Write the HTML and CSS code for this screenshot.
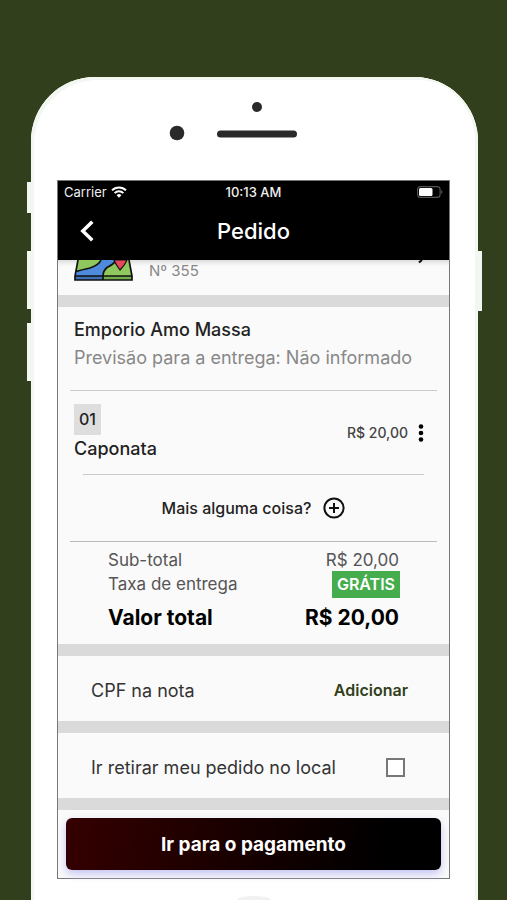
FILE: index.html
```html
<!DOCTYPE html>
<html lang="pt-BR">
<head>
<meta charset="utf-8">
<meta name="viewport" content="width=device-width, initial-scale=1">
<title>Pedido</title>
<link rel="stylesheet" href="styles.css">
</head>
<body>
<div class="phone">
  <span class="key key-mute"></span>
  <span class="key key-up"></span>
  <span class="key key-down"></span>
  <span class="key key-power"></span>
  <div class="bezel">
    <svg width="122" height="38" viewBox="0 0 122 38" aria-hidden="true">
      <circle cx="88" cy="5" r="5" fill="#2a2a2a"/>
      <circle cx="8" cy="31" r="7.3" fill="#2a2a2a"/>
      <rect x="48" y="28.500" width="80" height="7" rx="3.500" fill="#2a2a2a"/>
    </svg>
  </div>
  <main class="screen">
    <div class="status">
      <span class="carrier">Carrier
        <svg width="16" height="12" viewBox="0 0 16 12" aria-hidden="true">
          <g fill="none" stroke="#fff" stroke-width="2"><path d="M1 4.400a10 10 0 0 1 14 0"/><path d="M3.600 7.100a6.300 6.300 0 0 1 8.800 0"/></g>
          <path d="M8 11.800 5.600 9.200a3.400 3.400 0 0 1 4.800 0z" fill="#fff"/>
        </svg>
      </span>
      <span class="time">10:13 AM</span>
      <svg class="battery" width="26" height="12" viewBox="0 0 26 12" aria-hidden="true">
        <rect x=".6" y=".6" width="22.500" height="10.800" rx="3" fill="none" stroke="#555" stroke-width="1.100"/>
        <rect x="2" y="2" width="13.500" height="8" rx="1.500" fill="#fff"/>
        <path d="M24.200 4v4q1.200-.5 1.200-2t-1.200-2z" fill="#555"/>
      </svg>
    </div>
    <header class="bar">
      <button class="back" aria-label="Voltar">
        <svg width="14" height="22" viewBox="0 0 14 22" aria-hidden="true"><path d="M12.300 1.700 2.800 11l9.500 9.300" fill="none" stroke="#fff" stroke-width="3.500"/></svg>
      </button>
      <h1>Pedido</h1>
    </header>
    <section class="address">
      <svg width="60" height="21" viewBox="0 0 60 21" aria-hidden="true">
        <path d="M4 0h51l3 16v4H1v-4z" fill="#8fc85c"/>
        <path d="M27 0Q25 5 16 8 7 10 2 11.500L1 16h28q0-5 4-8.500Q40 4 42 0z" fill="#4e8bdc"/>
        <path d="M1 16h28v4H1z" fill="#3f6fb5"/><path d="M29 16h29v4H29z" fill="#72ad4a"/>
        <path d="M4 0 1 16v4h57v-4L55 0M1 16h57M29 20v-4q0-5 4-8.500Q40 4 42 0M27 0Q25 5 16 8 7 10 2 11.500" fill="none" stroke="#111" stroke-width="1.700"/>
        <path d="M40 0q2 5 6 10Q51 5 53 0z" fill="#e9495d" stroke="#111" stroke-width="1.200"/>
      </svg>
      <span class="number">Nº 355</span>
      <svg class="edit" width="8" height="4" viewBox="0 0 8 4" aria-hidden="true"><path d="M2 2.500 5 0" stroke="#111" stroke-width="2.200"/></svg>
    </section>
    <section class="store">
      <h2>Emporio Amo Massa</h2>
      <p>Previsão para a entrega: Não informado</p>
    </section>
    <section class="item">
      <div class="product">
        <span class="qty">01</span>
        <span class="name">Caponata</span>
      </div>
      <span class="price">R$ 20,00</span>
      <button class="menu" aria-label="Opções do item">
        <svg width="6" height="18" viewBox="0 0 6 18" aria-hidden="true"><circle cx="3" cy="2.500" r="2.300"/><circle cx="3" cy="9" r="2.300"/><circle cx="3" cy="15.500" r="2.300"/></svg>
      </button>
    </section>
    <button class="more">Mais alguma coisa?
      <svg width="22" height="22" viewBox="0 0 22 22" aria-hidden="true"><g fill="none" stroke="#111" stroke-width="2"><circle cx="11" cy="11" r="9.600"/><path d="M11 6v10M6 11h10"/></g></svg>
    </button>
    <dl class="totals">
      <div><dt>Sub-total</dt><dd>R$ 20,00</dd></div>
      <div><dt>Taxa de entrega</dt><dd class="free">GRÁTIS</dd></div>
      <div class="grand"><dt>Valor total</dt><dd>R$ 20,00</dd></div>
    </dl>
    <section class="row">
      <span>CPF na nota</span>
      <button class="add">Adicionar</button>
    </section>
    <section class="row">
      <label for="pickup">Ir retirar meu pedido no local</label>
      <input type="checkbox" id="pickup">
    </section>
    <div class="footer"><button class="pay">Ir para o pagamento</button></div>
  </main>
  <div class="home"></div>
</div>
</body>
</html>
```
FILE: styles.css
```css
* { box-sizing: border-box; }
html { background: #323f1c; }
body {
  margin: 0;
  padding: 77px 29px 0 31px;
  min-height: 100vh;
  display: flex;
  font-family: Inter, "Liberation Sans", sans-serif;
  color: #222;
}
h1, h2, p, dl, dd { margin: 0; }
button { padding: 0; border: 0; background: none; font: inherit; color: inherit; }
svg { display: block; flex: none; }

.phone {
  position: relative;
  flex: 1;
  padding: 0 28px 0 26px;
  background: #fff;
  border-radius: 64px 64px 0 0;
  box-shadow: inset 3px 3px 0 #f3f7f1, inset -3px 0 0 #f3f7f1;
}
.key { position: absolute; width: 5px; background: #f3f7f1; }
.key-mute { left: -4px; top: 105px; height: 31px; }
.key-up { left: -4px; top: 174px; height: 58px; }
.key-down { left: -4px; top: 246px; height: 58px; }
.key-power { right: -4px; top: 174px; height: 60px; }
.bezel { height: 103px; padding-top: 25px; display: flex; justify-content: center; }
.bezel svg { overflow: visible; margin-right: 48px; }

.screen { border: 1px solid #777; background: #fafafa; }
.status {
  display: grid;
  grid-template-columns: 1fr auto 1fr;
  align-items: center;
  height: 21px;
  padding: 0 6px;
  background: #000;
  color: #eee;
  font-size: 13px;
}
.carrier { display: flex; align-items: center; gap: 4px; }
.time { font-weight: 500; }
.battery { justify-self: end; }
.bar {
  display: grid;
  grid-template-columns: 58px 1fr 58px;
  align-items: center;
  height: 58px;
  background: #000;
  color: #fff;
}
.back { justify-self: center; }
.bar h1 { text-align: center; font-size: 22px; line-height: 28px; font-weight: 500; }

.address {
  display: flex;
  align-items: flex-start;
  height: 47px;
  padding: 0 24px 0 16px;
  background: linear-gradient(#ddd, #fafafa 6px);
  border-bottom: 12px solid #dadada;
}
.number { flex: 1; margin-left: 15px; font-size: 15px; line-height: 22px; color: #888; }

.store { margin: 0 12px; padding: 11px 4px 20px; height: 84px; border-bottom: 1px solid #ccc; white-space: nowrap; }
.store h2 { font-size: 18px; line-height: 24px; font-weight: 500; }
.store p { margin-top: 4px; font-size: 18px; line-height: 24px; color: #888; }

.item {
  display: flex;
  align-items: center;
  height: 84px;
  margin: 0 25px;
  border-bottom: 1px solid #ccc;
}
.product { flex: 1; margin-left: -9px; display: flex; flex-direction: column; align-items: flex-start; gap: 2px; font-size: 18px; font-weight: 500; }
.qty { padding: 0 5px; font-size: 16px; line-height: 31px; background: #dedede; }
.name { line-height: 24px; }
.price { font-size: 14px; line-height: 20px; font-weight: 500; color: #444; }
.menu { margin-left: 10px; }

.more {
  display: flex;
  align-items: center;
  justify-content: center;
  gap: 12px;
  width: calc(100% - 24px);
  height: 67px;
  margin: 0 12px;
  border-bottom: 1px solid #bbb;
  font-size: 16px;
  font-weight: 500;
}

.totals { height: 114px; padding: 6px 50px 0; border-bottom: 12px solid #dadada; font-size: 17px; color: #555; }
.totals div { display: flex; justify-content: space-between; align-items: center; height: 24px; }
.totals .free { margin-right: -1px; padding: 0 5px; font-size: 16px; line-height: 27px; background: #45ad4d; color: #fff; font-weight: 600; }
.totals .grand { height: 42px; font-size: 21px; font-weight: 700; color: #000; }

.row {
  display: flex;
  justify-content: space-between;
  align-items: center;
  height: 77px;
  padding: 3px 41px 0 33px;
  border-bottom: 12px solid #dadada;
  font-size: 18px;
  color: #333;
}
.add { font-size: 16px; font-weight: 600; color: #323f1c; }
.row input { appearance: none; width: 19px; height: 19px; margin: 0 3px; border: 2px solid #777; background: #fff; }

.footer { padding: 8px; background: #fafafa; }
.pay {
  display: block;
  width: 100%;
  height: 52px;
  border-radius: 6px;
  background: linear-gradient(100deg, #350000, #000 85%);
  box-shadow: 0 4px 8px #c4c4f4;
  color: #fff;
  font-size: 19px;
  font-weight: 700;
}
.home { width: 34px; height: 4px; margin: 17px auto 0; border-radius: 50% 50% 0 0 / 100% 100% 0 0; background: #f1f1f1; }
```
